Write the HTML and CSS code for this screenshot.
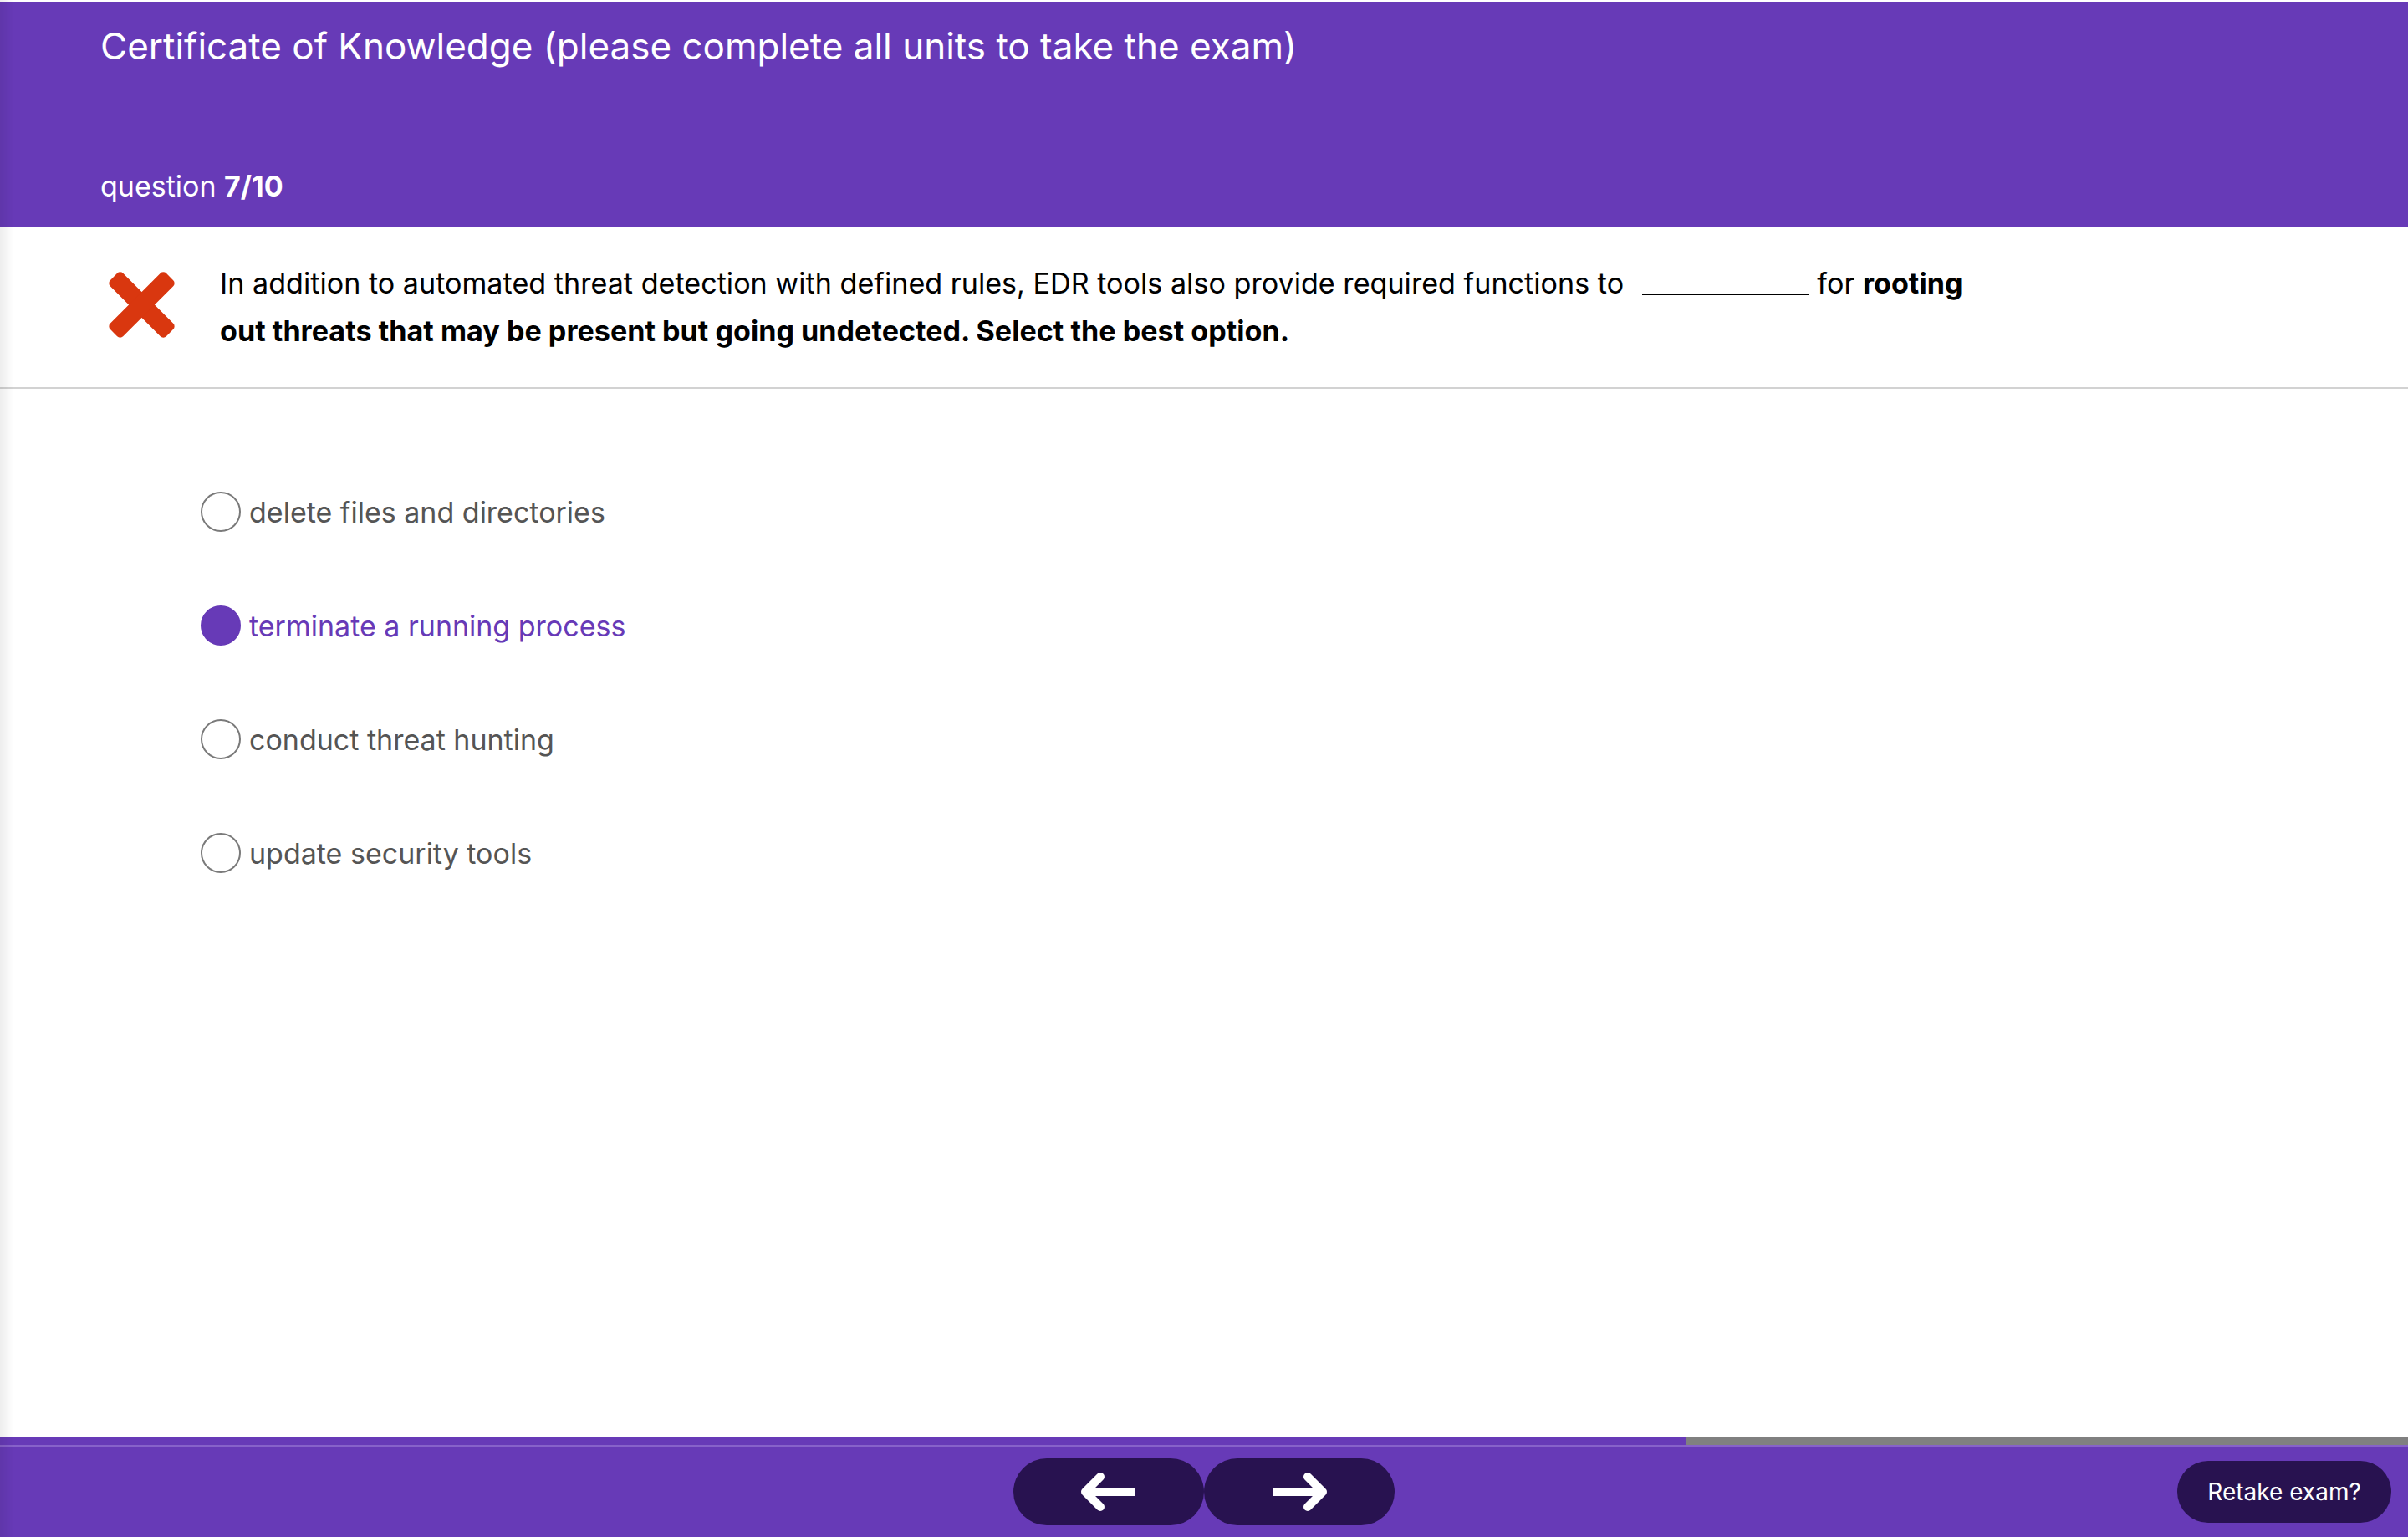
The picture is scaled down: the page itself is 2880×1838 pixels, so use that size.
FILE: index.html
```html
<!DOCTYPE html>
<html lang="en">
<head>
<meta charset="utf-8">
<title>Certificate of Knowledge</title>
<link rel="stylesheet" href="styles.css">
</head>
<body>
<div class="page">
  <header class="header">
    <h1 class="title">Certificate of Knowledge (please complete all units to take the exam)</h1>
    <div class="counter">question <b>7/10</b></div>
  </header>

  <section class="question">
    <svg class="wrong" viewBox="0 0 80 80" aria-hidden="true">
      <g fill="#d9370f">
        <rect x="-8" y="29" width="96" height="22" rx="5" transform="rotate(45 40 40)"/>
        <rect x="-8" y="29" width="96" height="22" rx="5" transform="rotate(-45 40 40)"/>
      </g>
    </svg>
    <p class="qtext">In addition to automated threat detection with defined rules, EDR tools also provide required functions to <span class="blank"></span> for <b>rooting</b><br><b>out threats that may be present but going undetected. Select the best option.</b></p>
  </section>

  <main class="options">
    <label class="option"><span class="radio"></span><span class="otext">delete files and directories</span></label>
    <label class="option selected"><span class="radio"></span><span class="otext">terminate a running process</span></label>
    <label class="option"><span class="radio"></span><span class="otext">conduct threat hunting</span></label>
    <label class="option"><span class="radio"></span><span class="otext">update security tools</span></label>
  </main>

  <footer class="footer">
    <div class="progress"><div class="progress-fill" style="width:70%"></div></div>
    <div class="footbar">
      <div class="nav">
        <button class="navbtn" aria-label="Previous">
          <svg viewBox="0 0 72 50" class="arrow">
            <line x1="10" y1="25" x2="68" y2="25" stroke="#fff" stroke-width="10"/>
            <polyline points="26,7 8,25 26,43" fill="none" stroke="#fff" stroke-width="10" stroke-linecap="round" stroke-linejoin="round"/>
          </svg>
        </button>
        <button class="navbtn" aria-label="Next">
          <svg viewBox="0 0 72 50" class="arrow">
            <line x1="4" y1="25" x2="62" y2="25" stroke="#fff" stroke-width="10"/>
            <polyline points="46,7 64,25 46,43" fill="none" stroke="#fff" stroke-width="10" stroke-linecap="round" stroke-linejoin="round"/>
          </svg>
        </button>
      </div>
      <button class="retake">Retake exam?</button>
    </div>
  </footer>
</div>
</body>
</html>
```

FILE: styles.css
```css
html, body {
  margin: 0;
  padding: 0;
  height: 100%;
}
body {
  font-family: Inter, "Noto Sans", sans-serif;
  background: #ffffff;
  color: #000;
}
body::before {
  content: "";
  position: fixed;
  left: 0;
  top: 0;
  bottom: 0;
  width: 16px;
  background: linear-gradient(to right, rgba(0,0,0,0.07), rgba(0,0,0,0));
  pointer-events: none;
  z-index: 5;
}
.page {
  display: flex;
  flex-direction: column;
  height: 1838px;
  padding-top: 2px;
  box-sizing: border-box;
}
.header {
  background: #673ab7;
  color: #fff;
  height: 269px;
  box-sizing: border-box;
  padding: 25px 0 26px 120px;
  display: flex;
  flex-direction: column;
  justify-content: space-between;
}
.title {
  margin: 0;
  font-size: 44px;
  font-weight: 400;
  line-height: 56px;
  letter-spacing: 0;
}
.counter {
  font-size: 34px;
  line-height: 44px;
}
.counter b {
  font-weight: 700;
}
.question {
  height: 194px;
  box-sizing: border-box;
  border-bottom: 2px solid #d2d2d2;
  display: flex;
  align-items: flex-start;
  padding: 54px 0 0 130px;
}
.wrong {
  width: 79px;
  height: 79px;
  flex: none;
}
.qtext {
  margin: -15px 0 0 54px;
  width: 2100px;
  font-size: 34.1px;
  letter-spacing: 0.03px;
  line-height: 57px;
  color: #000;
}
.qtext b {
  font-weight: 700;
}
.blank {
  display: inline-block;
  width: 200px;
  height: 2px;
  background: #000;
  margin-left: 12px;
  vertical-align: -2px;
}
.options {
  flex: 1;
  display: flex;
  flex-direction: column;
  gap: 88px;
  padding: 123px 0 0 240px;
}
.option {
  display: flex;
  align-items: center;
  height: 48px;
  gap: 10px;
  color: #555;
  font-size: 34px;
}
.radio {
  width: 44px;
  height: 44px;
  border: 2px solid #7a7a7a;
  border-radius: 50%;
  flex: none;
}
.option.selected {
  color: #673ab7;
}
.option.selected .radio {
  background: #673ab7;
  border-color: #673ab7;
}
.footer {
  flex: none;
}
.progress {
  height: 10px;
  background: #808080;
  border-bottom: 2px solid #8762c9;
}
.progress-fill {
  height: 100%;
  background: #673ab7;
}
.footbar {
  background: #673ab7;
  height: 108px;
  display: flex;
  align-items: center;
  justify-content: flex-end;
  padding-right: 20px;
  position: relative;
}
.nav {
  position: absolute;
  left: 50%;
  top: 14px;
  transform: translateX(-50%);
  display: flex;
}
.navbtn {
  width: 228px;
  height: 80px;
  border: none;
  border-radius: 40px;
  background: #281250;
  display: flex;
  align-items: center;
  justify-content: center;
  padding: 0;
  cursor: pointer;
}
.arrow {
  width: 72px;
  height: 50px;
}
.retake {
  width: 256px;
  height: 74px;
  border: none;
  border-radius: 37px;
  background: #281250;
  color: #fff;
  font-family: Inter, "Noto Sans", sans-serif;
  font-size: 28px;
  padding: 0;
  cursor: pointer;
}
```
